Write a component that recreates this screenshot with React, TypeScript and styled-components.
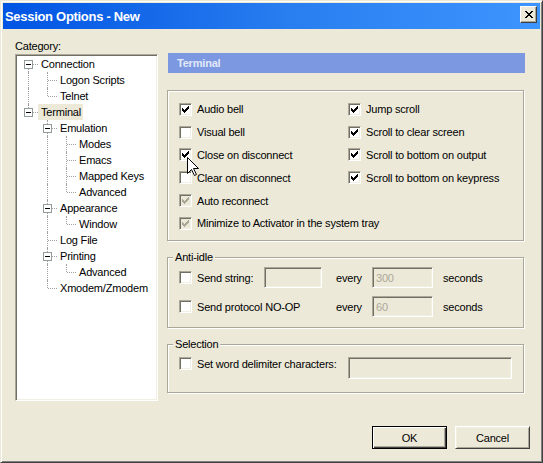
import React from "react";
import styled, { createGlobalStyle } from "styled-components";

type TreeNode = {
  label: string;
  level: number;
  expandable?: boolean;
  selected?: boolean;
};

const nodes: TreeNode[] = [
  { label: "Connection", level: 0, expandable: true },
  { label: "Logon Scripts", level: 1 },
  { label: "Telnet", level: 1 },
  { label: "Terminal", level: 0, expandable: true, selected: true },
  { label: "Emulation", level: 1, expandable: true },
  { label: "Modes", level: 2 },
  { label: "Emacs", level: 2 },
  { label: "Mapped Keys", level: 2 },
  { label: "Advanced", level: 2 },
  { label: "Appearance", level: 1, expandable: true },
  { label: "Window", level: 2 },
  { label: "Log File", level: 1 },
  { label: "Printing", level: 1, expandable: true },
  { label: "Advanced", level: 2 },
  { label: "Xmodem/Zmodem", level: 1 },
];

const hasNextSibling = (list: TreeNode[], idx: number) => {
  const lv = list[idx].level;
  for (let j = idx + 1; j < list.length; j++) {
    if (list[j].level < lv) return false;
    if (list[j].level === lv) return true;
  }
  return false;
};

const treeRows = nodes.map((n, i) => {
  const guides: boolean[] = [];
  for (let l = 0; l < n.level; l++) {
    let a = i - 1;
    while (a >= 0 && nodes[a].level !== l) a--;
    guides.push(a >= 0 && hasNextSibling(nodes, a));
  }
  return { ...n, guides, next: hasNextSibling(nodes, i), first: i === 0 };
});

type Option = { label: string; checked?: boolean; disabled?: boolean; span?: boolean };

const terminalOptions: Option[] = [
  { label: "Audio bell", checked: true },
  { label: "Jump scroll", checked: true },
  { label: "Visual bell" },
  { label: "Scroll to clear screen", checked: true },
  { label: "Close on disconnect", checked: true },
  { label: "Scroll to bottom on output", checked: true },
  { label: "Clear on disconnect" },
  { label: "Scroll to bottom on keypress", checked: true },
  { label: "Auto reconnect", checked: true, disabled: true, span: true },
  { label: "Minimize to Activator in the system tray", checked: true, disabled: true, span: true },
];

const CheckMark = ({ disabled }: { disabled?: boolean }) => (
  <svg width="7" height="7" viewBox="0 0 7 7" shapeRendering="crispEdges">
    <path
      fill={disabled ? "#aca899" : "#000"}
      d="M6 0h1v1h-1z M5 1h2v1h-2z M0 2h1v1h-1z M4 2h3v1h-3z M0 3h2v1h-2z M3 3h3v1h-3z M0 4h5v1h-5z M1 5h3v1h-3z M2 6h1v1h-1z"
    />
  </svg>
);

const CheckBox = ({ checked, disabled }: { checked?: boolean; disabled?: boolean }) => (
  <Box $disabled={disabled}>{checked && <CheckMark disabled={disabled} />}</Box>
);

const App: React.FC = () => {
  return (
    <>
      <GlobalStyle />
      <Window>
        <TitleBar>
          <span>Session Options - New</span>
          <CloseButton>
            <svg width="8" height="7" viewBox="0 0 8 7" shapeRendering="crispEdges">
              <path
                fill="#000"
                d="M0 0h2v1h-2z M6 0h2v1h-2z M1 1h2v1h-2z M5 1h2v1h-2z M2 2h4v1h-4z M3 3h2v1h-2z M2 4h4v1h-4z M1 5h2v1h-2z M5 5h2v1h-2z M0 6h2v1h-2z M6 6h2v1h-2z"
              />
            </svg>
          </CloseButton>
        </TitleBar>

        <Body>
          <MainRow>
            <LeftColumn>
              <FieldLabel>Category:</FieldLabel>
              <Tree>
                {treeRows.map((r, i) => (
                  <TreeRow key={i}>
                    {r.guides.map((g, k) => (
                      <Guide key={k} $line={g} />
                    ))}
                    <Guide $top={!r.first} $bottom={r.next} $branch>
                      {r.expandable && <Expander />}
                    </Guide>
                    <TreeLabel $selected={r.selected}>{r.label}</TreeLabel>
                  </TreeRow>
                ))}
              </Tree>
            </LeftColumn>

            <RightColumn>
              <PageHeader>Terminal</PageHeader>

              <OptionsGroup>
                {terminalOptions.map((o) => (
                  <CheckRow key={o.label} $span={o.span}>
                    <CheckBox checked={o.checked} disabled={o.disabled} />
                    <span>{o.label}</span>
                  </CheckRow>
                ))}
                <Cursor width="13" height="20" viewBox="0 0 13 20">
                  <path
                    d="M0.5 0.5 L0.5 16.5 L4.5 12.5 L7.5 18.5 L9.5 17.5 L6.5 11.5 L11.5 11.5 Z"
                    fill="#fff"
                    stroke="#000"
                    strokeWidth="1"
                  />
                </Cursor>
              </OptionsGroup>

              <GroupBox $mt={16}>
                <Legend>Anti-idle</Legend>
                <IdleGrid>
                  <CheckRow>
                    <CheckBox />
                    <span>Send string:</span>
                  </CheckRow>
                  <TextInput $w={58} />
                  <span>every</span>
                  <TextInput $w={61}>300</TextInput>
                  <span>seconds</span>

                  <CheckRow $span>
                    <CheckBox />
                    <span>Send protocol NO-OP</span>
                  </CheckRow>
                  <span>every</span>
                  <TextInput $w={61}>60</TextInput>
                  <span>seconds</span>
                </IdleGrid>
              </GroupBox>

              <GroupBox $mt={16}>
                <Legend>Selection</Legend>
                <SelectionRow>
                  <CheckRow>
                    <CheckBox />
                    <span>Set word delimiter characters:</span>
                  </CheckRow>
                  <TextInput $w={164} $h={22} />
                </SelectionRow>
              </GroupBox>
            </RightColumn>
          </MainRow>

          <Footer>
            <Button $default>OK</Button>
            <Button>Cancel</Button>
          </Footer>
        </Body>
      </Window>
    </>
  );
};

export default App;

/* ===================== styles ===================== */
const GlobalStyle = createGlobalStyle`
  html, body {
    margin: 0;
    padding: 0;
    background: #ece9d8;
  }
  body {
    font-family: "Liberation Sans", Arial, sans-serif;
    font-size: 11px;
    letter-spacing: -0.2px;
    color: #000;
  }
  * {
    box-sizing: border-box;
  }
`;

const Window = styled.div`
  width: 543px;
  height: 463px;
  display: flex;
  flex-direction: column;
  padding: 2px;
  background: #ece9d8;
  border: 1px solid;
  border-color: #ece9d8 #404040 #404040 #ece9d8;
  box-shadow: inset 1px 1px #fff, inset -1px -1px #808080;
`;

const TitleBar = styled.div`
  flex: none;
  height: 26px;
  display: flex;
  align-items: center;
  justify-content: space-between;
  padding: 0 3px 0 2px;
  background: linear-gradient(to right, #0054e3, #2a7ff0 55%, #3d95ff);
  color: #fff;
  font-size: 13px;
  font-weight: bold;
  letter-spacing: -0.3px;
`;

const CloseButton = styled.span`
  width: 17px;
  height: 17px;
  margin-top: -3px;
  display: flex;
  align-items: center;
  justify-content: center;
  background: #ece9d8;
  border: 1px solid;
  border-color: #fff #404040 #404040 #fff;
  box-shadow: inset -1px -1px #aca899;
`;

const Body = styled.div`
  flex: 1;
  display: flex;
  flex-direction: column;
  padding: 11px 10px 0 12px;
`;

const MainRow = styled.div`
  display: flex;
  gap: 9px;
`;

const LeftColumn = styled.div`
  width: 143px;
  display: flex;
  flex-direction: column;
`;

const FieldLabel = styled.div`
  height: 14px;
  line-height: 13px;
`;

const Tree = styled.div`
  height: 347px;
  background: #fff;
  border: 1px solid;
  border-color: #aca899 #fff #fff #aca899;
  box-shadow: inset 1px 1px #716f64, inset -1px -1px #f1efe2;
  padding: 1px 0 0 3px;
`;

const TreeRow = styled.div`
  height: 16px;
  display: flex;
  align-items: center;
`;

const Guide = styled.span<{ $line?: boolean; $top?: boolean; $bottom?: boolean; $branch?: boolean }>`
  position: relative;
  flex: none;
  width: 19px;
  height: 16px;

  &::before {
    content: "";
    display: ${({ $line, $top, $bottom }) => ($line || $top || $bottom ? "block" : "none")};
    position: absolute;
    left: 9px;
    top: ${({ $line, $top }) => ($line || $top ? 0 : 8)}px;
    bottom: ${({ $line, $bottom }) => ($line || $bottom ? 0 : 8)}px;
    border-left: 1px dotted #a0a0a0;
  }
  &::after {
    content: "";
    display: ${({ $branch }) => ($branch ? "block" : "none")};
    position: absolute;
    left: 10px;
    right: 0;
    top: 8px;
    border-top: 1px dotted #a0a0a0;
  }
`;

const Expander = styled.span`
  position: absolute;
  z-index: 1;
  left: 5px;
  top: 4px;
  width: 9px;
  height: 9px;
  background: #fff;
  border: 1px solid #919b9c;

  &::after {
    content: "";
    position: absolute;
    left: 1px;
    top: 3px;
    width: 5px;
    height: 1px;
    background: #000;
  }
`;

const TreeLabel = styled.span<{ $selected?: boolean }>`
  height: 16px;
  line-height: 16px;
  padding: 0 2px 0 3px;
  white-space: nowrap;
  background: ${({ $selected }) => ($selected ? "#ece9d8" : "transparent")};
`;

const RightColumn = styled.div`
  width: 358px;
  display: flex;
  flex-direction: column;
  padding-top: 13px;
`;

const PageHeader = styled.div`
  height: 20px;
  margin-left: 1px;
  padding-left: 9px;
  line-height: 20px;
  background: #7b98e0;
  color: #e2e8fa;
  font-weight: bold;
`;

const GroupBox = styled.div<{ $mt: number }>`
  position: relative;
  margin-top: ${({ $mt }) => $mt}px;
  width: 357px;
  border: 1px solid #aca899;
  box-shadow: inset 1px 1px #fff, 1px 1px #fff;
`;

const OptionsGroup = styled(GroupBox).attrs({ $mt: 17 })`
  height: 151px;
  padding: 7px 0 0 11px;
  display: grid;
  grid-template-columns: 169px 1fr;
  grid-auto-rows: 22.8px;
  align-content: start;
`;

const Legend = styled.span`
  position: absolute;
  left: 5px;
  top: -7px;
  padding: 0 2px;
  line-height: 13px;
  background: #ece9d8;
`;

const CheckRow = styled.label<{ $span?: boolean }>`
  display: flex;
  align-items: center;
  gap: 5px;
  white-space: nowrap;
  grid-column: ${({ $span }) => ($span ? "1 / 3" : "auto")};
`;

const Box = styled.span<{ $disabled?: boolean }>`
  flex: none;
  width: 13px;
  height: 13px;
  display: inline-flex;
  align-items: center;
  justify-content: center;
  background: ${({ $disabled }) => ($disabled ? "#ece9d8" : "#fff")};
  border: 1px solid;
  border-color: #aca899 #fff #fff #aca899;
  box-shadow: inset 1px 1px #716f64, inset -1px -1px #f1efe2;
`;

const Cursor = styled.svg`
  position: absolute;
  left: 19px;
  top: 66px;
`;

const IdleGrid = styled.div`
  display: grid;
  grid-template-columns: 85px 72px 36px 71px auto;
  grid-auto-rows: 21px;
  row-gap: 8px;
  align-items: center;
  padding: 9px 0 10px 11px;
`;

const TextInput = styled.span<{ $w: number; $h?: number }>`
  width: ${({ $w }) => $w}px;
  height: ${({ $h }) => $h ?? 21}px;
  display: flex;
  align-items: center;
  padding-left: 3px;
  color: #aca899;
  background: #ece9d8;
  border: 1px solid;
  border-color: #aca899 #fff #fff #aca899;
  box-shadow: inset 1px 1px #716f64, inset -1px -1px #f1efe2;
`;

const SelectionRow = styled.div`
  display: grid;
  grid-template-columns: 169px auto;
  align-items: start;
  padding: 12px 0 13px 11px;
`;

const Footer = styled.div`
  display: flex;
  justify-content: flex-end;
  gap: 8px;
  margin-top: 25px;
`;

const Button = styled.button<{ $default?: boolean }>`
  width: 75px;
  height: 23px;
  padding: 0;
  font-family: inherit;
  font-size: 11px;
  letter-spacing: inherit;
  color: #000;
  background: #ece9d8;
  border: 1px solid;
  border-color: ${({ $default }) => ($default ? "#000" : "#fff #404040 #404040 #fff")};
  box-shadow: ${({ $default }) =>
    $default
      ? "inset 1px 1px #fff, inset -1px -1px #404040, inset -2px -2px #aca899"
      : "inset 1px 1px #f1efe2, inset -1px -1px #aca899"};
`;
